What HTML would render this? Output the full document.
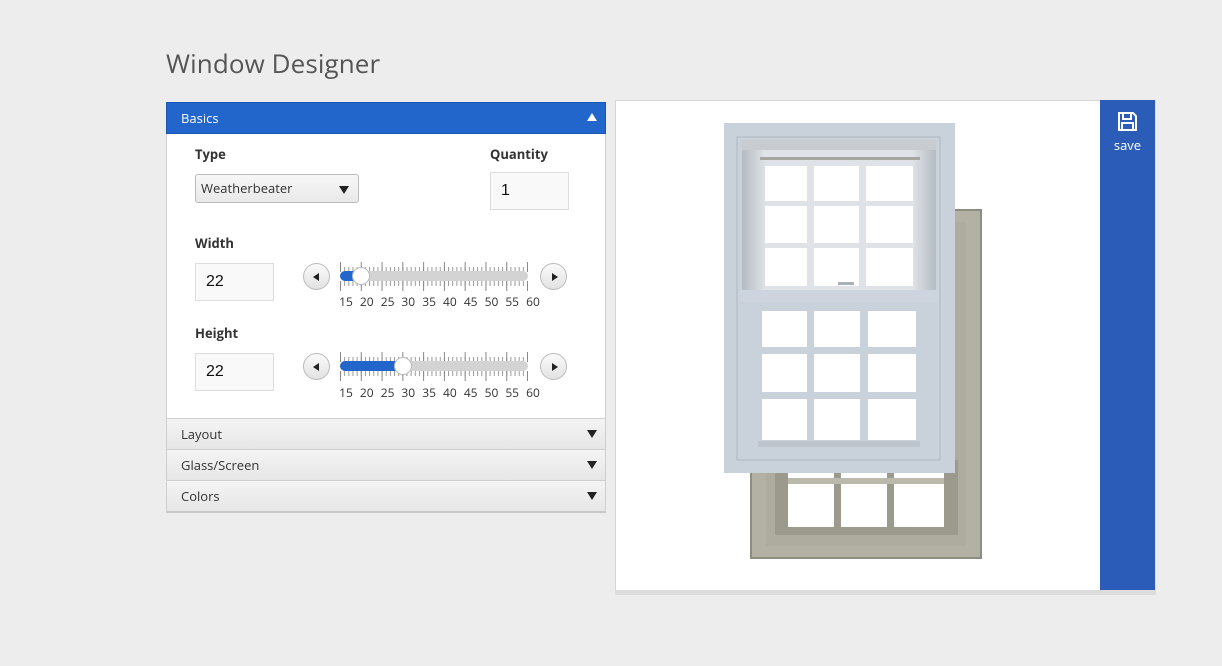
<!DOCTYPE html>
<html><head><meta charset="utf-8"><style>
*{box-sizing:border-box;margin:0;padding:0}
body{width:1222px;height:666px;background:#ededed;font-family:"Open Sans","Liberation Sans",sans-serif;position:relative;overflow:hidden;color:#333}
.a{position:absolute}
h1{position:absolute;left:166px;top:45px;font-size:26px;font-weight:normal;color:#555;letter-spacing:0.1px}
.hdr{position:absolute;left:166px;width:440px;height:32px;font-size:13px;color:#333;padding:6px 0 0 14px;background:linear-gradient(#f4f4f4,#e6e6e6);border:1px solid #cfcfcf;border-top:none}
.tri{position:absolute;right:8px;top:11px;width:0;height:0;border-left:5px solid transparent;border-right:5px solid transparent;border-top:8px solid #222}
.lbl{position:absolute;font-size:13px;font-weight:bold;color:#333}
.inp{position:absolute;background:#f9f9f9;border:1px solid #ddd;font-family:"Liberation Sans",sans-serif;font-size:16px;color:#111;padding-left:10px}
.btn{position:absolute;width:27px;height:27px;border-radius:50%;border:1px solid #bbb;background:linear-gradient(#fafafa,#e2e2e2)}
.btn i{position:absolute;top:9px;width:0;height:0;border-top:4px solid transparent;border-bottom:4px solid transparent}
.nums{position:absolute;font-size:12px;color:#333}
.nums span{position:absolute;width:20px;text-align:center}
</style></head><body>
<h1>Window Designer</h1>

<div class="a" style="left:166px;top:102px;width:440px;height:32px;background:#2266cc;border:1px solid #1a57b5;color:#fff;font-size:13px;padding:6px 0 0 14px">Basics
<div class="a" style="right:8px;top:10px;border-left:5px solid transparent;border-right:5px solid transparent;border-bottom:8px solid #fff"></div></div>
<div class="a" style="left:166px;top:134px;width:440px;height:285px;background:#fff;border:1px solid #cfcfcf;border-top:none"></div>

<div class="lbl" style="left:195px;top:145px">Type</div>
<div class="a" style="left:195px;top:174px;width:164px;height:29px;border:1px solid #bbb;border-radius:3px;background:linear-gradient(#f7f7f7,#e9e9e9);font-size:13px;padding:4px 0 0 5px;color:#333">Weatherbeater
<div class="a" style="right:9px;top:11px;border-left:5px solid transparent;border-right:5px solid transparent;border-top:8px solid #222"></div></div>
<div class="lbl" style="left:490px;top:145px">Quantity</div>
<div class="inp" style="left:490px;top:172px;width:79px;height:38px;padding-top:9px">1</div>

<div class="lbl" style="left:195px;top:234px">Width</div>
<div class="inp" style="left:195px;top:263px;width:79px;height:38px;padding-top:9px">22</div>
<div class="lbl" style="left:195px;top:324px">Height</div>
<div class="inp" style="left:195px;top:353px;width:79px;height:38px;padding-top:9px">22</div>

<svg class="a" style="left:0;top:0" width="620" height="420">
<defs>
<pattern id="mn" x="340" y="0" width="4.156" height="420" patternUnits="userSpaceOnUse"><rect x="0" y="0" width="1" height="420" fill="#999"/></pattern>
<pattern id="mj" x="340" y="0" width="20.78" height="420" patternUnits="userSpaceOnUse"><rect x="0" y="0" width="1" height="420" fill="#888"/></pattern>
</defs>
<g>
<rect x="340" y="267" width="188" height="5" fill="url(#mn)"/>
<rect x="340" y="262" width="188" height="10" fill="url(#mj)"/>
<rect x="340" y="281" width="188" height="5" fill="url(#mn)"/>
<rect x="340" y="281" width="188" height="10" fill="url(#mj)"/>
<rect x="340" y="271" width="188" height="10" rx="5" fill="#d3d3d3"/>
<rect x="340" y="271" width="22" height="10" rx="5" fill="#2266cc"/>
<circle cx="361" cy="276" r="8.5" fill="#fff" stroke="#bbb"/>
</g>
<g>
<rect x="340" y="357" width="188" height="5" fill="url(#mn)"/>
<rect x="340" y="352" width="188" height="10" fill="url(#mj)"/>
<rect x="340" y="371" width="188" height="5" fill="url(#mn)"/>
<rect x="340" y="371" width="188" height="10" fill="url(#mj)"/>
<rect x="340" y="361" width="188" height="10" rx="5" fill="#d3d3d3"/>
<rect x="340" y="361" width="64" height="10" rx="5" fill="#2266cc"/>
<circle cx="403" cy="366" r="8.5" fill="#fff" stroke="#bbb"/>
</g>
</svg>

<div class="btn" style="left:303px;top:263px"><i style="left:9px;border-right:6px solid #222"></i></div>
<div class="btn" style="left:540px;top:263px"><i style="left:11px;border-left:6px solid #222"></i></div>
<div class="btn" style="left:303px;top:353px"><i style="left:9px;border-right:6px solid #222"></i></div>
<div class="btn" style="left:540px;top:353px"><i style="left:11px;border-left:6px solid #222"></i></div>

<div class="nums" style="left:336px;top:293px"><span style="left:0">15</span><span style="left:20.8px">20</span><span style="left:41.6px">25</span><span style="left:62.3px">30</span><span style="left:83.1px">35</span><span style="left:103.9px">40</span><span style="left:124.7px">45</span><span style="left:145.5px">50</span><span style="left:166.2px">55</span><span style="left:187px">60</span></div>
<div class="nums" style="left:336px;top:384px"><span style="left:0">15</span><span style="left:20.8px">20</span><span style="left:41.6px">25</span><span style="left:62.3px">30</span><span style="left:83.1px">35</span><span style="left:103.9px">40</span><span style="left:124.7px">45</span><span style="left:145.5px">50</span><span style="left:166.2px">55</span><span style="left:187px">60</span></div>

<div class="hdr" style="top:419px;height:31px">Layout<div class="tri"></div></div>
<div class="hdr" style="top:450px;height:31px">Glass/Screen<div class="tri"></div></div>
<div class="hdr" style="top:481px;height:32px;border-bottom:2px solid #c8c8c8">Colors<div class="tri"></div></div>

<div class="a" style="left:615px;top:100px;width:541px;height:495px;background:#dcdcdc"></div>
<div class="a" style="left:615px;top:100px;width:486px;height:490px;background:#fff;border:1px solid #d6d6d6;border-bottom:none"></div>
<div class="a" style="left:1100px;top:100px;width:55px;height:490px;background:#2b5db8;color:#fff;font-size:13px;text-align:center">
<svg style="position:absolute;left:17px;top:11px" width="21" height="21" viewBox="0 0 21 21"><path d="M2 2h14l3 3v14H2z" fill="none" stroke="#fff" stroke-width="2"/><rect x="6" y="2" width="8" height="6" fill="none" stroke="#fff" stroke-width="2"/><rect x="5" y="12" width="11" height="7" fill="none" stroke="#fff" stroke-width="2"/></svg>
<div style="position:absolute;left:0;right:0;top:36px">save</div></div>

<svg class="a" style="left:0;top:0" width="1222" height="666">
<defs>
<linearGradient id="us" x1="0" x2="1" y1="0" y2="0"><stop offset="0" stop-color="#b5bbc2"/><stop offset="0.12" stop-color="#dfe3e8"/><stop offset="0.88" stop-color="#dfe3e8"/><stop offset="1" stop-color="#b5bbc2"/></linearGradient>
</defs>
<!-- back window -->
<rect x="750" y="209" width="232" height="350" fill="#8f8d80"/>
<rect x="752" y="211" width="228" height="346" fill="#b3b1a3"/>
<rect x="766" y="222" width="200" height="324" fill="#aeac9e"/>
<rect x="775" y="460" width="183" height="75" fill="#9c9a8c"/>
<rect x="788" y="470" width="46" height="57" fill="#fff"/>
<rect x="841" y="470" width="46" height="57" fill="#fff"/>
<rect x="894" y="470" width="50" height="57" fill="#fff"/>
<rect x="788" y="478" width="156" height="6" fill="#bbb9ac"/>
<!-- front window -->
<rect x="724" y="123" width="231" height="350" fill="#c9d1db"/>
<rect x="737" y="137" width="203" height="323" fill="none" stroke="#b0b8c2" stroke-width="1"/>
<rect x="742" y="140" width="194" height="150" fill="url(#us)"/>
<rect x="742" y="140" width="194" height="10" fill="#c8ccd0"/>
<rect x="760" y="157" width="160" height="3" fill="#a5a79f"/>
<rect x="740" y="290" width="198" height="12" fill="#cdd4dd"/>
<g fill="#fff">
<rect x="765" y="166" width="42" height="35"/><rect x="814" y="166" width="45" height="35"/><rect x="866" y="166" width="47" height="35"/>
<rect x="765" y="206" width="42" height="37"/><rect x="814" y="206" width="45" height="37"/><rect x="866" y="206" width="47" height="37"/>
<rect x="765" y="248" width="42" height="38"/><rect x="814" y="248" width="45" height="38"/><rect x="866" y="248" width="47" height="38"/>
<rect x="762" y="311" width="45" height="36"/><rect x="814" y="311" width="46" height="36"/><rect x="868" y="311" width="48" height="36"/>
<rect x="762" y="354" width="45" height="38"/><rect x="814" y="354" width="46" height="38"/><rect x="868" y="354" width="48" height="38"/>
<rect x="762" y="399" width="45" height="41"/><rect x="814" y="399" width="46" height="41"/><rect x="868" y="399" width="48" height="41"/>
</g>
<rect x="758" y="441" width="162" height="6" fill="#bfc5cc"/>
<rect x="838" y="282" width="16" height="3" fill="#a9b0b6"/>
</svg>
</body></html>
